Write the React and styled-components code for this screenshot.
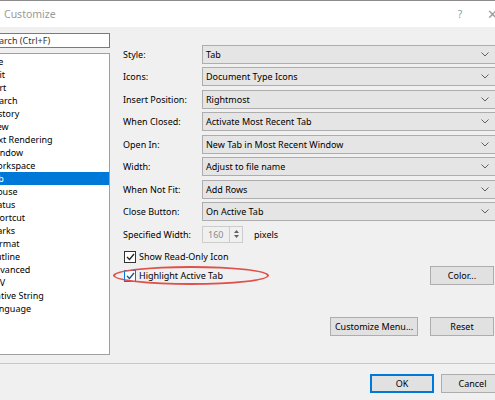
import React from "react";
import styled, { createGlobalStyle } from "styled-components";

const Global = createGlobalStyle`
  html, body {
    margin: 0;
    padding: 0;
    background: #f0f0f0;
  }
  body {
    font-family: "Noto Sans", "Open Sans", sans-serif;
    font-size: 9px;
    color: #000;
  }
`;

const Screen = styled.div`
  width: 495px;
  height: 400px;
  overflow: hidden;
  position: relative;
  border-top: 1px solid #8c8c8c;
  box-sizing: border-box;
`;

const Dialog = styled.div`
  width: 522px;
  margin-left: -14px;
  display: flex;
  flex-direction: column;
`;

const TitleBar = styled.div`
  height: 26px;
  background: #fff;
  display: flex;
  align-items: center;
  padding-left: 18px;
  color: #9a9a9a;
  font-size: 10.5px;
`;

const TitleText = styled.div`
  flex: 1;
`;

const TitleButton = styled.div`
  width: 32px;
  text-align: center;
  color: #9a9a9a;
  font-size: ${(p) => (p.big ? "13px" : "10.5px")};
`;

const Body = styled.div`
  height: 336px;
  display: flex;
  box-sizing: border-box;
  padding-top: 6px;
`;

const Sidebar = styled.div`
  width: 124px;
  display: flex;
  flex-direction: column;
`;

const Search = styled.div`
  height: 15px;
  box-sizing: border-box;
  border: 1px solid #7a7a7a;
  background: #fff;
  padding-left: 2px;
  color: #333;
  line-height: 13px;
`;

const List = styled.div`
  margin-top: 5px;
  height: 302px;
  box-sizing: border-box;
  border: 1px solid #a0a0a0;
  background: #fff;
  padding-top: 1px;
`;

const Item = styled.div`
  height: 13px;
  line-height: 13px;
  padding-left: 2px;
  background: ${(p) => (p.selected ? "#0078d7" : "transparent")};
  color: ${(p) => (p.selected ? "#fff" : "#000")};
  white-space: nowrap;
`;

const Main = styled.div`
  flex: 1;
  padding: 11.5px 12px 0 13px;
  display: flex;
  flex-direction: column;
`;

const Form = styled.div`
  display: grid;
  grid-template-columns: 79px 1fr;
  grid-auto-rows: 19px;
  row-gap: 3.5px;
  align-items: center;
`;

const Label = styled.div`
  white-space: nowrap;
`;

const Combo = styled.div`
  height: 19px;
  box-sizing: border-box;
  border: 1px solid #adadad;
  background: #e5e5e5;
  display: flex;
  align-items: center;
  padding: 0 6px 0 3px;
`;

const ComboText = styled.div`
  flex: 1;
`;

const SpinRow = styled.div`
  display: flex;
  align-items: center;
  height: 17px;
`;

const SpinBox = styled.div`
  width: 41px;
  height: 17px;
  box-sizing: border-box;
  border: 1px solid #cccccc;
  background: #f0f0f0;
  display: flex;
`;

const SpinText = styled.div`
  flex: 1;
  color: #8c8c8c;
  padding-left: 5px;
  line-height: 15px;
`;

const SpinButtons = styled.div`
  width: 13px;
  border-left: 1px solid #cccccc;
  display: flex;
  flex-direction: column;
  align-items: center;
  justify-content: space-around;
  padding: 2px 0;
  box-sizing: border-box;
`;

const Unit = styled.div`
  margin-left: 11px;
`;

const Checks = styled.div`
  margin-top: 3.5px;
  display: flex;
  flex-direction: column;
`;

const CheckRow = styled.div`
  height: 19px;
  display: flex;
  align-items: center;
  position: relative;
`;

const Box = styled.div`
  width: 10px;
  height: 10px;
  border: 1px solid ${(p) => (p.focus ? "#0078d7" : "#333")};
  background: #fff;
  display: flex;
  align-items: center;
  justify-content: center;
  margin-left: 1px;
  margin-right: 3px;
`;

const Spacer = styled.div`
  flex: 1;
`;

const Button = styled.div`
  width: ${(p) => p.w || 64}px;
  height: 19px;
  box-sizing: border-box;
  border: 1px solid ${(p) => (p.primary ? "#0078d7" : "#adadad")};
  box-shadow: ${(p) => (p.primary ? "inset 0 0 0 1px #0078d7" : "none")};
  background: #e1e1e1;
  display: flex;
  align-items: center;
  justify-content: center;
  white-space: nowrap;
  margin-right: ${(p) => p.mr || 0}px;
`;

const ActionRow = styled.div`
  margin-top: 32px;
  display: flex;
  justify-content: flex-end;
  gap: 12px;
  padding-right: 2px;
`;

const Footer = styled.div`
  height: 36px;
  border-top: 1px solid #c8c8c8;
  border-bottom: 1px solid #9a9a9a;
  display: flex;
  justify-content: flex-end;
  align-items: flex-start;
  gap: 7px;
  padding: 10px 4px 0 0;
`;

const Annotation = styled.div`
  position: absolute;
  left: -10px;
  top: 0;
  width: 152px;
  height: 15px;
  border: 2px solid #e0504a;
  border-radius: 50%;
  pointer-events: none;
`;

const Chevron = () => (
  <svg width="8" height="5" viewBox="0 0 8 5">
    <polyline points="0.5,0.5 4,4 7.5,0.5" fill="none" stroke="#606060" strokeWidth="1" />
  </svg>
);

const Check = ({ color }) => (
  <svg width="9" height="8" viewBox="0 0 9 8">
    <polyline points="1,4 3.5,6.5 8,1" fill="none" stroke={color} strokeWidth="1.3" />
  </svg>
);

const Arrow = ({ down }) => (
  <svg width="5" height="3" viewBox="0 0 5 3">
    <polygon points={down ? "0,0 5,0 2.5,3" : "0,3 5,3 2.5,0"} fill="#606060" />
  </svg>
);

const items = [
  "File", "Edit", "Sort", "Search", "History", "View", "Text Rendering",
  "Window", "Workspace", "Tab", "Mouse", "Status", "Shortcut", "Marks",
  "Format", "Outline", "Advanced", "CSV", "Native String", "Language",
];

const fields = [
  ["Style:", "Tab"],
  ["Icons:", "Document Type Icons"],
  ["Insert Position:", "Rightmost"],
  ["When Closed:", "Activate Most Recent Tab"],
  ["Open In:", "New Tab in Most Recent Window"],
  ["Width:", "Adjust to file name"],
  ["When Not Fit:", "Add Rows"],
  ["Close Button:", "On Active Tab"],
];

export default function App() {
  return (
    <Screen>
      <Global />
      <Dialog>
        <TitleBar>
          <TitleText>Customize</TitleText>
          <TitleButton>?</TitleButton>
          <TitleButton big>✕</TitleButton>
        </TitleBar>
        <Body>
          <Sidebar>
            <Search>Search (Ctrl+F)</Search>
            <List>
              {items.map((it) => (
                <Item key={it} selected={it === "Tab"}>{it}</Item>
              ))}
            </List>
          </Sidebar>
          <Main>
            <Form>
              {fields.map(([label, value]) => (
                <React.Fragment key={label}>
                  <Label>{label}</Label>
                  <Combo>
                    <ComboText>{value}</ComboText>
                    <Chevron />
                  </Combo>
                </React.Fragment>
              ))}
              <Label>Specified Width:</Label>
              <SpinRow>
                <SpinBox>
                  <SpinText>160</SpinText>
                  <SpinButtons>
                    <Arrow />
                    <Arrow down />
                  </SpinButtons>
                </SpinBox>
                <Unit>pixels</Unit>
              </SpinRow>
            </Form>
            <Checks>
              <CheckRow>
                <Box><Check color="#222" /></Box>
                Show Read-Only Icon
              </CheckRow>
              <CheckRow>
                <Box focus><Check color="#1a4f8a" /></Box>
                Highlight Active Tab
                <Spacer />
                <Button mr={2}>Color...</Button>
                <Annotation />
              </CheckRow>
            </Checks>
            <ActionRow>
              <Button w={88}>Customize Menu...</Button>
              <Button>Reset</Button>
            </ActionRow>
          </Main>
        </Body>
        <Footer>
          <Button primary>OK</Button>
          <Button w={63}>Cancel</Button>
        </Footer>
      </Dialog>
    </Screen>
  );
}
